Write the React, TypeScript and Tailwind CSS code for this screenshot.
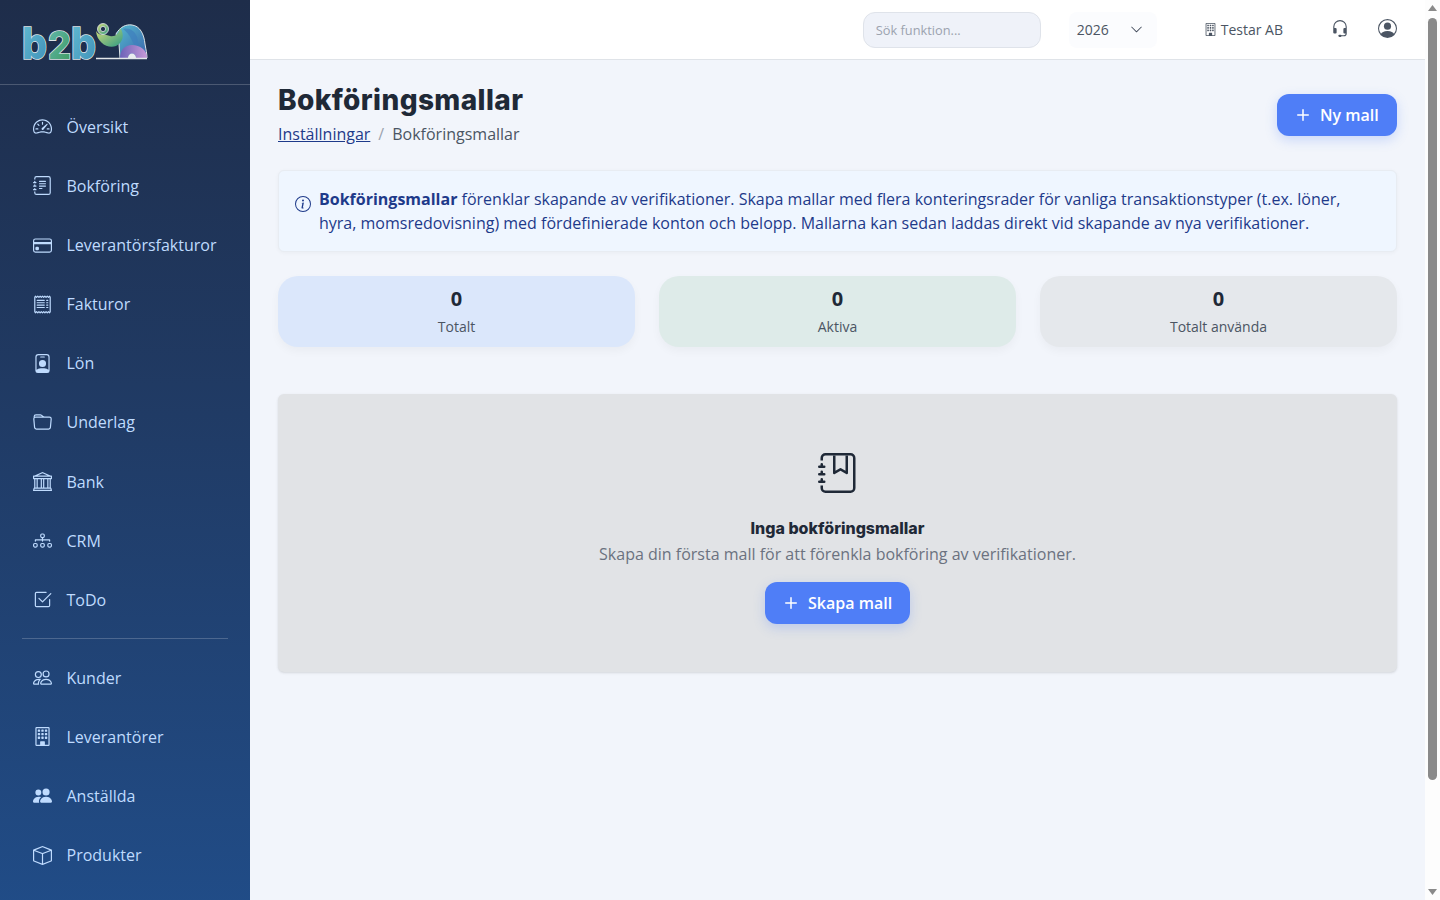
import { ReactNode } from "react"
import {
  BsBank,
  BsBox,
  BsBuilding,
  BsCheck2Square,
  BsChevronDown,
  BsCreditCard,
  BsDiagram3,
  BsFolder,
  BsHeadset,
  BsInfoCircle,
  BsJournalBookmark,
  BsJournalText,
  BsPeople,
  BsPeopleFill,
  BsPersonBadge,
  BsPersonCircle,
  BsPlus,
  BsReceipt,
  BsSpeedometer2,
} from "react-icons/bs"

const topNav: { label: string; icon: ReactNode }[] = [
  { label: "Översikt", icon: <BsSpeedometer2 /> },
  { label: "Bokföring", icon: <BsJournalText /> },
  { label: "Leverantörsfakturor", icon: <BsCreditCard /> },
  { label: "Fakturor", icon: <BsReceipt /> },
  { label: "Lön", icon: <BsPersonBadge /> },
  { label: "Underlag", icon: <BsFolder /> },
  { label: "Bank", icon: <BsBank /> },
  { label: "CRM", icon: <BsDiagram3 /> },
  { label: "ToDo", icon: <BsCheck2Square /> },
]

const bottomNav: { label: string; icon: ReactNode }[] = [
  { label: "Kunder", icon: <BsPeople /> },
  { label: "Leverantörer", icon: <BsBuilding /> },
  { label: "Anställda", icon: <BsPeopleFill /> },
  { label: "Produkter", icon: <BsBox /> },
]

const stats = [
  { label: "Totalt", bg: "bg-[#dbe7fb]" },
  { label: "Aktiva", bg: "bg-[#deebe9]" },
  { label: "Totalt använda", bg: "bg-[#e5e8ec]" },
]

function Logo() {
  return (
    <svg width="130" height="44" viewBox="0 0 130 44" className="block">
      <defs>
        <linearGradient id="b1" x1="0" y1="0" x2="1" y2="1">
          <stop offset="0" stopColor="#63bcd2" />
          <stop offset="1" stopColor="#3f8fb8" />
        </linearGradient>
        <linearGradient id="two" x1="0" y1="0" x2="1" y2="1">
          <stop offset="0" stopColor="#62b9b4" />
          <stop offset="1" stopColor="#3f9a5a" />
        </linearGradient>
        <linearGradient id="trunk" x1="0" y1="0" x2="1" y2="1">
          <stop offset="0" stopColor="#d5dc78" />
          <stop offset="1" stopColor="#2f9a84" />
        </linearGradient>
        <linearGradient id="body" x1="0" y1="0" x2="1" y2="1">
          <stop offset="0" stopColor="#55bccf" />
          <stop offset="1" stopColor="#3a62ad" />
        </linearGradient>
        <linearGradient id="leg" x1="0" y1="0" x2="1" y2="0">
          <stop offset="0" stopColor="#6c62b8" />
          <stop offset="1" stopColor="#c79ad8" />
        </linearGradient>
      </defs>
      <g fontFamily="Inter, sans-serif" fontWeight="800" stroke="#dfe5e8" strokeWidth="1.6" paintOrder="stroke">
        <text x="2" y="39" fontSize="44" fill="url(#b1)" textLength="25" lengthAdjust="spacingAndGlyphs">b</text>
        <text x="28" y="39" fontSize="38" fill="url(#two)" textLength="23" lengthAdjust="spacingAndGlyphs">2</text>
        <text x="51" y="39" fontSize="44" fill="url(#b1)" textLength="25" lengthAdjust="spacingAndGlyphs">b</text>
      </g>
      <path d="M96 14C100 7 106 4 112 5C120 6 124 14 125 24C126 30 127 34 127 38H100L99 24Z" fill="url(#body)" stroke="#dfe5e8" strokeWidth="1" />
      <path d="M103 9C110 7 117 12 118 21C119 26 118 29 116 30C113 22 110 14 103 9Z" fill="#3f7fbd" opacity="0.7" />
      <path d="M76 11C77 23 88 29 96 26C103 23 105 14 100 8C99 14 95 17 90 16C86 15 84 14 83 14C80 15 78 14 76 11Z" fill="url(#trunk)" />
      <circle cx="83" cy="9" r="5.5" fill="url(#trunk)" stroke="#dfe5e8" strokeWidth="0.8" />
      <circle cx="83" cy="9" r="2.6" fill="#1e2f4d" stroke="#dfe5e8" strokeWidth="0.8" />
      <path d="M100 38C100 30 105 25 112 25C120 25 127 30 127 38H116C116 35 114 33.5 112 33.5C110 33.5 108 35 108 38Z" fill="url(#leg)" />
      <path d="M108 38C108 35 110 33.5 112 33.5C114 33.5 116 35 116 38Z" fill="#e8ecee" />
      <path d="M76 38.5H127" stroke="#e4e8ea" strokeWidth="1.4" />
    </svg>
  )
}

function NavItem({ label, icon }: { label: string; icon: ReactNode }) {
  return (
    <a className="flex h-[59.125px] items-center pl-[32px] text-[16px] text-[#bfdbfe]">
      <span className="flex w-[20px] justify-center text-[19px]">{icon}</span>
      <span className="ml-[14.5px]">{label}</span>
    </a>
  )
}

function PrimaryButton({ label, className }: { label: string; className: string }) {
  return (
    <button className={"flex h-[42px] items-center rounded-xl bg-[#4f7ef7] text-[16px] font-semibold text-white shadow-[0_4px_12px_rgba(79,126,247,0.25)] " + className}>
      <BsPlus className="text-[24px]" />
      <span className="ml-[5px]">{label}</span>
    </button>
  )
}

function Scrollbar() {
  return (
    <div className="flex h-screen w-[15px] shrink-0 flex-col items-center bg-[#fdfdfd]">
      <svg width="9" height="18" viewBox="0 0 9 18" className="block shrink-0">
        <path d="M4.5 5L9 11H0Z" fill="#8a8a8a" />
      </svg>
      <div className="h-[762px] w-[9px] shrink-0 rounded-full bg-[#8a8a8a]" />
      <svg width="9" height="18" viewBox="0 0 9 18" className="mt-auto block shrink-0">
        <path d="M0 7H9L4.5 13Z" fill="#8a8a8a" />
      </svg>
    </div>
  )
}

export default function App() {
  return (
    <div className="flex h-screen overflow-hidden font-['Open_Sans',sans-serif]">
      <div className="flex h-[1020px] min-w-0 flex-1">
        <aside className="w-[250px] shrink-0 bg-gradient-to-b from-[#1e2d4a] to-[#20508f]">
          <div className="flex h-[85px] items-center border-b border-white/20 pl-[20px]">
            <Logo />
          </div>
          <nav className="pt-[12.3px]">
            {topNav.map((item) => (
              <NavItem key={item.label} {...item} />
            ))}
            <div className="mx-[22px] mt-[8.2px] mb-[9.5px] border-t border-white/20" />
            {bottomNav.map((item) => (
              <NavItem key={item.label} {...item} />
            ))}
          </nav>
        </aside>

        <div className="min-w-0 flex-1 bg-[#f2f5fb]">
          <header className="flex h-[60px] items-center border-b border-[#dfe3e8] bg-white pr-[28px]">
            <input
              placeholder="Sök funktion..."
              className="ml-auto h-[36px] w-[178px] rounded-xl border border-[#dfe3ea] bg-[#eff2f9] px-[12px] text-[12.8px] outline-none placeholder:text-[#9ca3af]"
            />
            <div className="ml-[28px] flex h-[36px] w-[88px] items-center rounded-lg bg-[#fbfcfe] pl-[8px] text-[14px] text-[#4b5563]">
              2026
              <BsChevronDown className="ml-[21px] text-[13px] text-[#374151]" />
            </div>
            <div className="ml-[47px] flex items-center text-[14px] text-[#4b5563]">
              <BsBuilding className="text-[13px]" />
              <span className="ml-[4px]">Testar AB</span>
            </div>
            <BsHeadset className="mb-[2px] ml-[48px] text-[18px] text-[#4b5563]" />
            <BsPersonCircle className="mb-[2px] ml-[29px] text-[19px] text-[#4b5563]" />
          </header>

          <main className="px-[28px]">
            <div className="flex items-start justify-between pt-[20px]">
              <div>
                <h1 className="font-['Inter',sans-serif] text-[28px] leading-[40px] font-extrabold tracking-[0.4px] text-[#1f2937]">Bokföringsmallar</h1>
                <div className="mt-[2px] flex text-[16px] leading-[24px] text-[#4b5563]">
                  <a className="text-[#1e3a8a] underline">Inställningar</a>
                  <span className="mx-[8px] text-[#9ca3af]">/</span>
                  <span>Bokföringsmallar</span>
                </div>
              </div>
              <PrimaryButton label="Ny mall" className="mt-[14px] w-[120px] pl-[14px]" />
            </div>

            <div className="mt-[24px] flex rounded-md border border-[#e8ecf2] bg-[#eff6ff] px-[16px] py-[16px] text-[16px] leading-[24px] text-[#1e3a8a] shadow-[0_1px_4px_rgba(0,0,0,0.04)]">
              <BsInfoCircle className="mt-[9px] shrink-0 text-[16px]" />
              <p className="ml-[8px]">
                <strong className="font-bold">Bokföringsmallar</strong> förenklar skapande av verifikationer. Skapa mallar med flera konteringsrader för vanliga transaktionstyper (t.ex. löner, hyra, momsredovisning) med fördefinierade konton och belopp. Mallarna kan sedan laddas direkt vid skapande av nya verifikationer.
              </p>
            </div>

            <div className="mt-[24px] grid grid-cols-3 gap-[24px]">
              {stats.map((s) => (
                <div key={s.label} className={"flex h-[71px] flex-col items-center rounded-[20px] pt-[9px] shadow-[0_4px_10px_rgba(0,0,0,0.04)] " + s.bg}>
                  <div className="text-[20px] leading-[28px] font-bold text-[#1f2937]">0</div>
                  <div className="mt-[4px] text-[14px] leading-[20px] text-[#4b5563]">{s.label}</div>
                </div>
              ))}
            </div>

            <div className="mt-[47px] flex h-[278px] flex-col items-center rounded-md bg-[#e1e3e6] pt-[59px] shadow-sm">
              <BsJournalBookmark className="text-[40px] text-[#1f2937]" />
              <h2 className="mt-[23px] font-['Inter',sans-serif] text-[16px] leading-[24px] font-extrabold text-[#1f2937]">Inga bokföringsmallar</h2>
              <p className="mt-[2px] text-[16px] leading-[24px] text-[#6b7280]">Skapa din första mall för att förenkla bokföring av verifikationer.</p>
              <PrimaryButton label="Skapa mall" className="mt-[16px] w-[145px] pl-[14px]" />
            </div>
          </main>
        </div>
      </div>
      <Scrollbar />
    </div>
  )
}
